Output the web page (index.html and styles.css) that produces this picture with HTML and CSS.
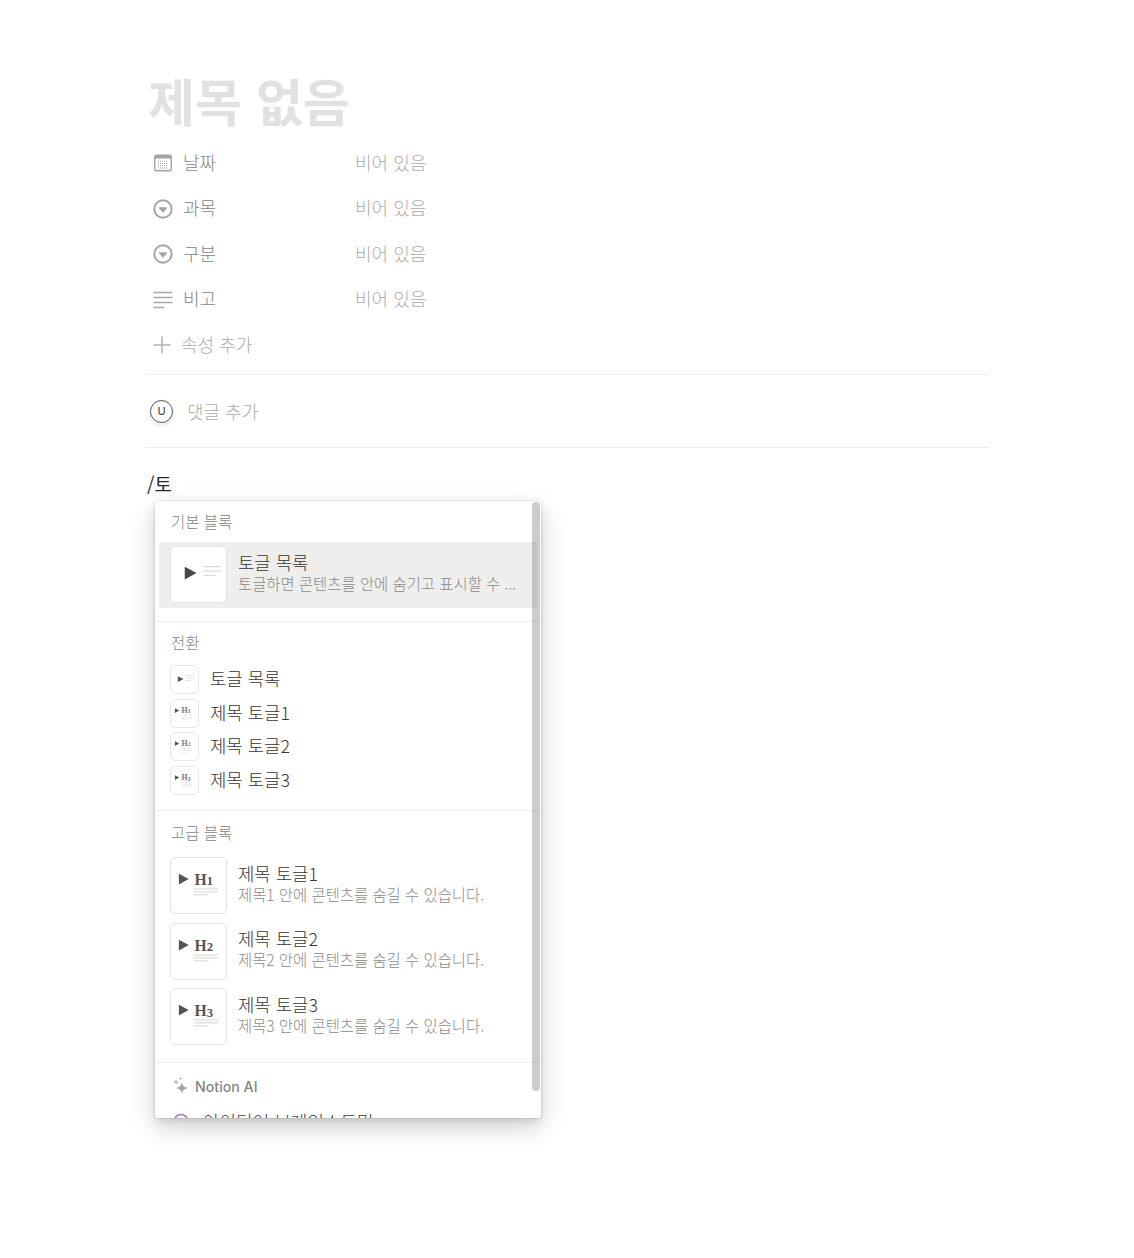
FILE: index.html
```html
<!DOCTYPE html>
<html lang="ko">
<head>
<meta charset="utf-8">
<title>제목 없음</title>
<link rel="stylesheet" href="styles.css">
</head>
<body>
<svg class="defs" width="0" height="0" aria-hidden="true">
  <symbol id="chev" viewBox="0 0 20 20">
    <circle cx="10" cy="10" r="8.700" fill="none" stroke="currentColor" stroke-width="1.900"/>
    <path d="M6.600 8.200h6.800a.6.6 0 0 1 .5 1l-3.400 4a.6.6 0 0 1-1 0l-3.400-4a.6.6 0 0 1 .5-1z" fill="currentColor"/>
  </symbol>
</svg>
<main class="page">
  <h1 class="title">제목 없음</h1>
  <section class="props">
    <div class="prop">
      <svg class="prop-icon" viewBox="0 0 20 20"><rect x="1" y="1.500" width="18" height="17" rx="2.500" fill="#a3a29f"/><rect x="2.400" y="5.500" width="15.200" height="11.600" rx="1" fill="#fff"/><path d="M5 8.400h10M5 10.600h10M5 12.800h10M5 15h10" stroke="#a3a29f" stroke-width="1" stroke-dasharray="1 1"/></svg>
      <span class="prop-label">날짜</span><span class="prop-value">비어 있음</span>
    </div>
    <div class="prop">
      <svg class="prop-icon"><use href="#chev"/></svg>
      <span class="prop-label">과목</span><span class="prop-value">비어 있음</span>
    </div>
    <div class="prop">
      <svg class="prop-icon"><use href="#chev"/></svg>
      <span class="prop-label">구분</span><span class="prop-value">비어 있음</span>
    </div>
    <div class="prop">
      <svg class="prop-icon" viewBox="0 0 20 20"><path d="M0.500 2.500h19M0.500 7.500h19M0.500 12.500h19M0.500 17.500h11" fill="none" stroke="#a9a8a5" stroke-width="1.400"/></svg>
      <span class="prop-label">비고</span><span class="prop-value">비어 있음</span>
    </div>
    <div class="prop add">
      <svg class="prop-icon" viewBox="0 0 20 20"><path d="M9 1.500v17M0.500 10h17" fill="none" stroke="#b4b3b1" stroke-width="1.500"/></svg>
      <span>속성 추가</span>
    </div>
  </section>
  <section class="comment">
    <span class="avatar">U</span>
    <span class="comment-text">댓글 추가</span>
  </section>
  <p class="slash">/토</p>
</main>

<aside class="menu">
  <div class="menu-scroll">
    <section class="group first">
      <h2 class="group-title">기본 블록</h2>
      <div class="big active">
        <span class="thumb">
          <svg viewBox="0 0 56 56" class="thumb-svg"><path d="M14 20l12 6.500-12 6.500z" fill="#4a4946"/><path d="M33 20h18M33 24.500h18M33 29h12" stroke="#d3d3d1" stroke-width="1"/></svg>
        </span>
        <div class="big-text"><div class="name">토글 목록</div><div class="desc">토글하면 콘텐츠를 안에 숨기고 표시할 수 ...</div></div>
      </div>
    </section>
    <section class="group second">
      <h2 class="group-title">전환</h2>
      <div class="small">
        <span class="mini"><svg viewBox="0 0 28 28" class="thumb-svg"><path d="M7 10.500l6 3-6 3z" fill="#55544f"/><path d="M15 10h9M15 12.500h9M15 15h6" stroke="#e2e2e0" stroke-width="1"/></svg></span>
        <span class="name">토글 목록</span>
      </div>
      <div class="small">
        <span class="mini"><svg viewBox="0 0 28 28" class="thumb-svg"><path d="M4 8.500l4.500 2.500L4 13.500z" fill="#55544f"/><text x="11" y="13.500" class="h-mini">H<tspan class="sub">1</tspan></text><path d="M11 16h11M11 18h11M11 20h7" stroke="#e2e2e0" stroke-width=".8"/></svg></span>
        <span class="name">제목 토글1</span>
      </div>
      <div class="small">
        <span class="mini"><svg viewBox="0 0 28 28" class="thumb-svg"><path d="M4 8.500l4.500 2.500L4 13.500z" fill="#55544f"/><text x="11" y="13.500" class="h-mini">H<tspan class="sub">2</tspan></text><path d="M11 16h11M11 18h11M11 20h7" stroke="#e2e2e0" stroke-width=".8"/></svg></span>
        <span class="name">제목 토글2</span>
      </div>
      <div class="small">
        <span class="mini"><svg viewBox="0 0 28 28" class="thumb-svg"><path d="M4 8.500l4.500 2.500L4 13.500z" fill="#55544f"/><text x="11" y="13.500" class="h-mini">H<tspan class="sub" dy="1">3</tspan></text><path d="M11 16h11M11 18h11M11 20h7" stroke="#e2e2e0" stroke-width=".8"/></svg></span>
        <span class="name">제목 토글3</span>
      </div>
    </section>
    <section class="group third">
      <h2 class="group-title">고급 블록</h2>
      <div class="big">
        <span class="thumb"><svg viewBox="0 0 56 56" class="thumb-svg"><path d="M8 16l10 5.500-10 5.500z" fill="#55544f"/><text x="24" y="27" class="h-big">H<tspan class="sub">1</tspan></text><path d="M23 31.500h25M23 34.500h25M23 37.500h15" stroke="#d3d3d1" stroke-width="1"/></svg></span>
        <div class="big-text"><div class="name">제목 토글1</div><div class="desc">제목1 안에 콘텐츠를 숨길 수 있습니다.</div></div>
      </div>
      <div class="big">
        <span class="thumb"><svg viewBox="0 0 56 56" class="thumb-svg"><path d="M8 16l10 5.500-10 5.500z" fill="#55544f"/><text x="24" y="27" class="h-big">H<tspan class="sub">2</tspan></text><path d="M23 31.500h25M23 34.500h25M23 37.500h15" stroke="#d3d3d1" stroke-width="1"/></svg></span>
        <div class="big-text"><div class="name">제목 토글2</div><div class="desc">제목2 안에 콘텐츠를 숨길 수 있습니다.</div></div>
      </div>
      <div class="big">
        <span class="thumb"><svg viewBox="0 0 56 56" class="thumb-svg"><path d="M8 16l10 5.500-10 5.500z" fill="#55544f"/><text x="24" y="27" class="h-big">H<tspan class="sub" dy="2">3</tspan></text><path d="M23 31.500h25M23 34.500h25M23 37.500h15" stroke="#d3d3d1" stroke-width="1"/></svg></span>
        <div class="big-text"><div class="name">제목 토글3</div><div class="desc">제목3 안에 콘텐츠를 숨길 수 있습니다.</div></div>
      </div>
    </section>
    <section class="group fourth">
      <h2 class="group-title ai">
        <svg class="spark" viewBox="0 0 20 20"><path d="M11 6c.6 3.600 1.800 5 6 6-4.200 1-5.400 2.400-6 6-.6-3.600-1.800-5-6-6 4.200-1 5.400-2.400 6-6z" fill="#a3a29f"/><path d="M5 4v4M3 6h4M9.500 1.500v2M8.500 2.500h2" stroke="#a3a29f" stroke-width="1"/></svg>
        Notion AI
      </h2>
      <div class="ai-item">
        <svg class="ai-dot" viewBox="0 0 16 16"><circle cx="8" cy="8" r="6.500" fill="none" stroke="#9a78cc" stroke-width="1.600"/></svg>
        <span class="name">아이디어 브레인스토밍</span>
      </div>
    </section>
  </div>
  <div class="scrollbar"></div>
</aside>
</body>
</html>
```
FILE: styles.css
```css
* { box-sizing: border-box; }
html, body { margin: 0; padding: 0; background: #fff; }
body {
  font-family: "Noto Sans CJK KR", "Noto Sans", sans-serif;
  color: #37352f;
  height: 1258px;
  overflow: hidden;
  position: relative;
}
.defs { position: absolute; }
.page { width: 845px; margin-left: 145px; padding-top: 67px; }
.title {
  margin: 0 0 0 3px;
  font-size: 51px;
  line-height: 66px;
  font-weight: 700;
  color: #e1e1e0;
}
.props {
  padding-top: 7.500px;
  padding-bottom: 6px;
  border-bottom: 1px solid #ededec;
}
.prop {
  height: 45.500px;
  display: flex;
  align-items: center;
  font-size: 18px;
  line-height: 24px;
  font-weight: 300;
  padding-left: 8px;
}
.prop > span { position: relative; top: -1.500px; }
.prop-icon { width: 20px; height: 20px; color: #a3a29f; flex: none; }
.prop-label { margin-left: 10px; width: 172px; color: #858583; }
.prop-value { color: #acacaa; }
.add { color: #acacaa; gap: 8px; }
.comment {
  height: 73px;
  display: flex;
  align-items: center;
  border-bottom: 1px solid #ededec;
  padding-left: 5px;
}
.avatar {
  width: 23px;
  height: 23px;
  border: 1px solid #55544f;
  border-radius: 50%;
  display: flex;
  align-items: center;
  justify-content: center;
  font: 400 11px "Inter", sans-serif;
  box-shadow: 0 2px 4px rgba(15, 15, 15, .12);
}
.comment-text { margin-left: 14px; font-size: 18px; font-weight: 300; color: #acacaa; }
.slash {
  margin: 23px 0 0 2px;
  font-size: 19px;
  line-height: 26px;
  color: #2a2925;
}

.menu {
  position: absolute;
  left: 155px;
  top: 501px;
  width: 386px;
  height: 617px;
  border-radius: 4px;
  background: #fff;
  box-shadow: 0 0 0 1px rgba(15, 15, 15, .05), 0 3px 6px rgba(15, 15, 15, .1), 0 9px 24px rgba(15, 15, 15, .2);
}
.menu-scroll { height: 100%; overflow: hidden; border-radius: 4px; }
.scrollbar {
  position: absolute;
  top: 1px;
  right: 1px;
  width: 8px;
  height: 589px;
  border-radius: 4px;
  background: rgba(120, 120, 118, .38);
}
.group { border-bottom: 1px solid #ededec; }
.first { height: 121px; }
.second { height: 189px; }
.third { height: 252px; }
.fourth { border-bottom: 0; }
.group-title {
  margin: 0;
  padding-left: 16px;
  height: 41px;
  display: flex;
  align-items: center;
  font-size: 15.500px;
  font-weight: 300;
  color: #858583;
}
.first .group-title { padding-bottom: 2px; }
.second .group-title { padding-bottom: 1px; }
.third .group-title { height: 42px; padding-bottom: 1px; }
.ai { font-family: "Inter", sans-serif; font-size: 14.200px; font-weight: 500; gap: 4px; height: 46px; }
.spark { width: 20px; height: 20px; flex: none; }
.big {
  margin: 0 4px;
  height: 65.500px;
  padding-left: 11px;
  display: flex;
  align-items: center;
  border-radius: 3px;
}
.active { background: #eeeeec; }
.thumb {
  width: 57px;
  height: 57px;
  flex: none;
  background: #fff;
  border: 1px solid #e3e3e1;
  border-radius: 5px;
}
.thumb-svg { display: block; width: 100%; height: 100%; }
.h-big { font: 700 16px "Liberation Serif", serif; fill: #55544f; }
.h-mini { font: 700 8px "Liberation Serif", serif; fill: #77766f; }
.sub { font-size: .8em; }
.big-text { margin-left: 11px; display: flex; flex-direction: column; position: relative; top: -2px; }
.name { font-size: 17.800px; font-weight: 300; line-height: 21px; color: #37352f; }
.desc { font-size: 15.400px; font-weight: 300; line-height: 21px; color: #8a8a88; white-space: nowrap; }
.small {
  height: 33.500px;
  padding-left: 15px;
  display: flex;
  align-items: center;
  gap: 11px;
}
.small .name { position: relative; top: -1px; }
.mini {
  width: 29px;
  height: 29px;
  flex: none;
  background: #fff;
  border: 1px solid #e8e8e6;
  border-radius: 5px;
}
.ai-item { padding-left: 18px; display: flex; align-items: center; gap: 14px; height: 24px; }
.ai-item .name { font-size: 18px; }
.ai-dot { width: 16px; height: 16px; flex: none; }
```
